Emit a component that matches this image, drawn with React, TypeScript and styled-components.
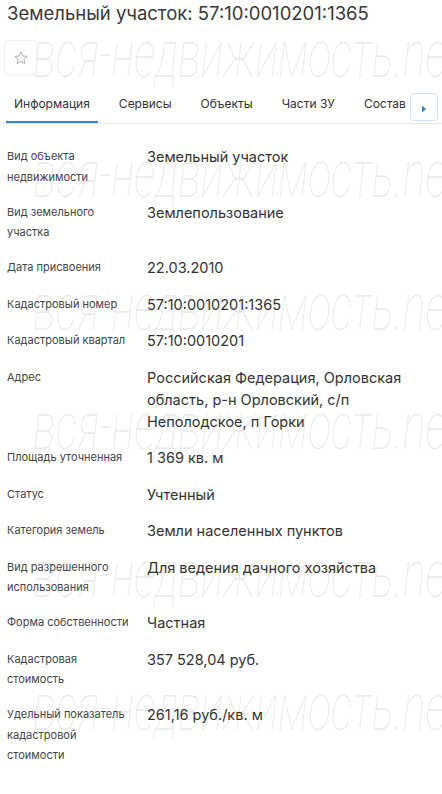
import React from "react";
import styled, { createGlobalStyle } from "styled-components";

type Field = { label: string; value: string };

const fields: Field[] = [
  { label: "Вид объекта недвижимости", value: "Земельный участок" },
  { label: "Вид земельного участка", value: "Землепользование" },
  { label: "Дата присвоения", value: "22.03.2010" },
  { label: "Кадастровый номер", value: "57:10:0010201:1365" },
  { label: "Кадастровый квартал", value: "57:10:0010201" },
  {
    label: "Адрес",
    value: "Российская Федерация, Орловская область, р-н Орловский, с/п Неполодское, п Горки",
  },
  { label: "Площадь уточненная", value: "1 369 кв. м" },
  { label: "Статус", value: "Учтенный" },
  { label: "Категория земель", value: "Земли населенных пунктов" },
  { label: "Вид разрешенного использования", value: "Для ведения дачного хозяйства" },
  { label: "Форма собственности", value: "Частная" },
  { label: "Кадастровая стоимость", value: "357 528,04 руб." },
  { label: "Удельный показатель кадастровой стоимости", value: "261,16 руб./кв. м" },
];

const tabs = ["Информация", "Сервисы", "Объекты", "Части ЗУ", "Состав", "Права"];

// where the watermark stamp sits, measured off the screenshot
const watermarkTops = [22, 142, 275, 394, 542, 675];

export default function App() {
  return (
    <>
      <GlobalStyle />
      <Page>
        <Watermark aria-hidden>
          {watermarkTops.map((top) => (
            <WatermarkLine key={top} style={{ top }}>
              вся-недвижимость.net
            </WatermarkLine>
          ))}
        </Watermark>

        <Title>Земельный участок: 57:10:0010201:1365</Title>

        <StarButton>
          <svg width="16" height="16" viewBox="0 0 24 24" fill="none" stroke="#a9a9a9" strokeWidth="1.4" strokeLinejoin="round">
            <path d="M12 2.8l2.75 6.1 6.65.62-5.02 4.43 1.48 6.52L12 17.08l-5.86 3.39 1.48-6.52L2.6 9.52l6.65-.62z" />
          </svg>
        </StarButton>

        <TabBar>
          <TabTrack>
            {tabs.map((t, i) => (
              <Tab key={t} $active={i === 0}>
                {t}
              </Tab>
            ))}
          </TabTrack>
          <ScrollButton>
            <svg width="6" height="8" viewBox="0 0 6 8">
              <path d="M1 0.5L5 4 1 7.5z" fill="#2f86d6" />
            </svg>
          </ScrollButton>
        </TabBar>

        <Details>
          {fields.map((f) => (
            <Row key={f.label}>
              <Label>{f.label}</Label>
              <Value>{f.value}</Value>
            </Row>
          ))}
        </Details>
      </Page>
    </>
  );
}

const GlobalStyle = createGlobalStyle`
  body {
    margin: 0;
    background: #fff;
    font-family: Inter, "Noto Sans", Arial, sans-serif;
    color: #333;
  }
`;

const Page = styled.div`
  position: relative;
  width: 442px;
  min-height: 794px;
  overflow: hidden;
`;

const Watermark = styled.div`
  position: absolute;
  inset: 0;
  pointer-events: none;
`;

const WatermarkLine = styled.div`
  position: absolute;
  left: 33px;
  font-family: Roboto, "DejaVu Sans", sans-serif;
  font-weight: 100;
  font-style: italic;
  font-size: 66px;
  line-height: 66px;
  color: rgba(0, 0, 0, 0.08);
  white-space: nowrap;
  transform: scaleX(0.65);
  transform-origin: 0 0;
`;

const Title = styled.h1`
  position: relative;
  margin: 0;
  padding: 0 7px;
  font-size: 18.5px;
  line-height: 26px;
  font-weight: 400;
  color: #383838;
`;

const StarButton = styled.div`
  position: relative;
  margin: 14px 0 0 4px;
  width: 33px;
  height: 35px;
  box-sizing: border-box;
  border: 1px solid #efefef;
  border-radius: 3px;
  display: flex;
  align-items: center;
  justify-content: center;
  background: rgba(255, 255, 255, 0.4);
`;

const TabBar = styled.div`
  position: relative;
  margin-top: 12px;
  border-bottom: 1px solid #e6e6e6;
  height: 36px;
`;

const TabTrack = styled.div`
  display: flex;
  gap: 13px;
  padding-left: 6px;
  overflow: hidden;
  width: 404px;
  height: 36px;
`;

const Tab = styled.div<{ $active?: boolean }>`
  flex: none;
  padding: 0 8px;
  font-size: 12px;
  line-height: 34px;
  color: #333;
  white-space: nowrap;
  border-bottom: 2px solid ${(p) => (p.$active ? "#2a86d8" : "transparent")};
`;

const ScrollButton = styled.div`
  position: absolute;
  right: 4px;
  top: 6px;
  width: 28px;
  height: 28px;
  box-sizing: border-box;
  border: 1px solid #d3e2f0;
  border-radius: 4px;
  background: #fff;
  display: flex;
  align-items: center;
  justify-content: center;
  padding-top: 3px;
`;

const Details = styled.div`
  position: relative;
  padding: 15px 0 20px;
`;

const Row = styled.div`
  display: grid;
  grid-template-columns: 128px 1fr;
  column-gap: 12px;
  padding: 7px 14px 7.5px 7px;
`;

const Label = styled.div`
  font-size: 11px;
  line-height: 20.5px;
  color: #454545;
`;

const Value = styled.div`
  font-size: 14.5px;
  line-height: 22px;
  color: #333;
`;
